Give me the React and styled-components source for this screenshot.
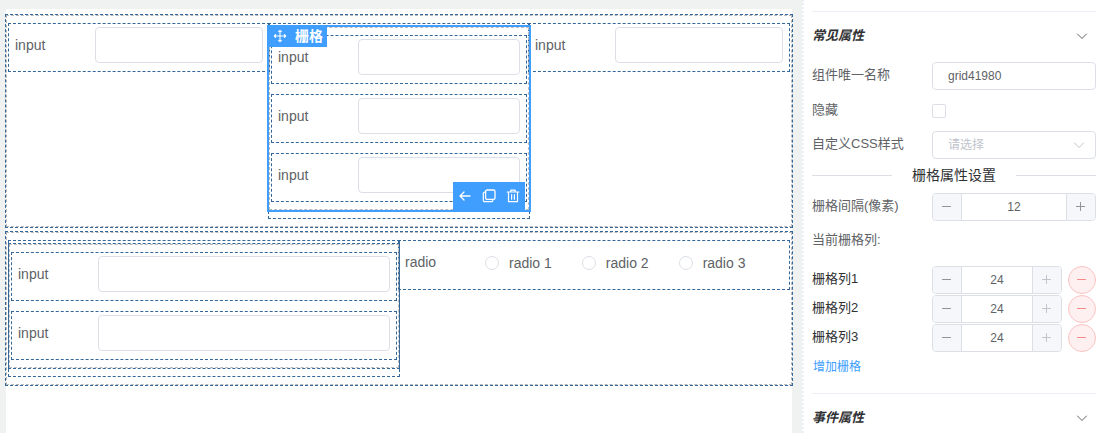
import styled, { createGlobalStyle, css } from 'styled-components';
import { useId, useState } from 'react';

const GlobalStyle = createGlobalStyle`
  * {
    box-sizing: border-box;
  }
  body {
    margin: 0;
    background: #fff;
    color: #606266;
    font-family: 'Liberation Sans', 'Noto Sans CJK SC', sans-serif;
    font-size: 14px;
  }
  button, input, select {
    font-family: inherit;
    margin: 0;
  }
`;

/* ---------- layout ---------- */
const Root = styled.div`
  display: flex;
  height: 100vh;
  overflow: hidden;
`;
const Main = styled.main`
  flex: 1;
  min-width: 0;
  padding: 9px 10px 0 6px;
  background: #f0f2f2;
`;
const Canvas = styled.div`
  display: flex;
  flex-direction: column;
  gap: 5px;
  height: 100%;
  padding-top: 6px;
  background: #fff;
`;
const Panel = styled.aside`
  width: 298px;
  padding: 11px 4px 0 8px;
  border-left: 2px dotted #ebeef5;
  overflow-y: auto;
  scrollbar-width: none;
`;

/* ---------- canvas widgets ---------- */
const GridBox = styled.div`
  position: relative;
  display: grid;
  grid-template-columns: repeat(${(props) => props.$cols || 1}, minmax(0, 1fr));
  align-items: start;
  row-gap: 12px;
  padding: 8px 2px;
  border: 1px dashed #bbb;
  outline: 1px dashed #336699;
  ${(props) =>
    props.$active &&
    css`
      outline: 2px solid #409eff;
    `}
`;
const Cell = styled.div`
  padding: 3px 0 8px;
  outline: 1px dashed #336699;
`;
const FieldCell = styled(Cell)`
  display: flex;
  padding: 3px 6px 8px;
`;
const FieldLabel = styled.label`
  flex: none;
  width: 80px;
  line-height: 36px;
`;
const FieldInput = styled.input`
  flex: 1;
  min-width: 0;
  height: 36px;
  padding: 0 15px;
  border: 1px solid #dcdfe6;
  border-radius: 4px;
  background: #fff;
  font-size: 14px;
`;
const RadioCell = styled(FieldCell)`
  padding-bottom: 9px;
`;
const RadioLabel = styled.label`
  display: flex;
  align-items: center;
  gap: 10px;
  margin-right: 30px;
  padding-top: 2px;
  white-space: nowrap;
`;
const Radio = styled.input.attrs({ type: 'radio' })`
  appearance: none;
  width: 14px;
  height: 14px;
  border: 1px solid #dcdfe6;
  border-radius: 50%;
  background: #fff;
  &:checked {
    border: 4px solid #409eff;
  }
`;
const DragHandle = styled.div`
  position: absolute;
  top: -3px;
  left: -3px;
  display: flex;
  align-items: center;
  gap: 8px;
  height: 22px;
  padding: 0 4px 0 6px;
  background: #409eff;
  color: #fff;
  font-weight: bold;
  line-height: 22px;
  cursor: move;
`;
const Tools = styled.div`
  position: absolute;
  right: 3px;
  bottom: -1px;
  display: flex;
  height: 28px;
  background: #409eff;
`;
const ToolButton = styled.button`
  display: grid;
  place-items: center;
  width: 24px;
  padding: 0;
  border: 0;
  background: none;
  color: #fff;
  cursor: pointer;
`;

/* ---------- property panel ---------- */
const SectionHead = styled.button`
  display: flex;
  align-items: center;
  justify-content: space-between;
  width: 100%;
  height: 49px;
  padding: 0 7px 0 0;
  border: 0;
  border-top: 1px solid #ebeef5;
  background: none;
  color: #303133;
  font-size: 13px;
  font-weight: bold;
  font-style: italic;
  line-height: 24px;
  cursor: pointer;
  svg {
    color: #606266;
  }
`;
const SectionTitle = styled.span`
  padding-bottom: 1px;
`;
const Props = styled.div`
  display: flex;
  flex-direction: column;
  gap: 6px;
  padding: 2px 0 0;
`;
const PropRow = styled.div`
  display: flex;
  align-items: center;
  min-height: ${(props) => (props.$tall ? '29px' : '28px')};
`;
const PropLabel = styled.label`
  flex: none;
  width: 120px;
  padding-bottom: 2px;
  color: ${(props) => (props.$dark ? '#303133' : '#606266')};
  font-size: 13px;
  line-height: 24px;
`;
const control = css`
  height: 28px;
  border: 1px solid #dcdfe6;
  border-radius: 4px;
  background: #fff;
  color: #606266;
  font-size: 12px;
`;
const TextInput = styled.input`
  ${control}
  flex: 1;
  min-width: 0;
  padding: 0 15px;
`;
const Checkbox = styled.input.attrs({ type: 'checkbox' })`
  appearance: none;
  width: 14px;
  height: 14px;
  border: 1px solid #dcdfe6;
  border-radius: 2px;
  background: #fff;
  &:checked {
    background: #409eff;
  }
`;
const SelectWrap = styled.div`
  position: relative;
  flex: 1;
  svg {
    position: absolute;
    top: 7px;
    right: 10px;
    color: #c0c4cc;
    pointer-events: none;
  }
`;
const Select = styled.select`
  ${control}
  display: block;
  appearance: none;
  width: 100%;
  padding: 0 30px 0 15px;
  color: #c0c4cc;
`;
const Divider = styled.div`
  display: flex;
  align-items: center;
  gap: 20px;
  height: 32px;
  margin-bottom: 2px;
  color: #303133;
  line-height: 32px;
  &::before,
  &::after {
    content: '';
    flex: 1;
    height: 1px;
    background: #dcdfe6;
  }
`;
const NumberWrap = styled.div`
  ${control}
  display: flex;
  flex: 1;
  min-width: 0;
  overflow: hidden;
`;
const NumberInput = styled.input`
  flex: 1;
  min-width: 0;
  padding: 0;
  border: solid #dcdfe6;
  border-width: 0 1px;
  color: #606266;
  font-size: 12px;
  text-align: center;
`;
const StepButton = styled.button`
  display: grid;
  place-items: center;
  width: 28px;
  padding: 0;
  border: 0;
  background: #f5f7fa;
  color: #909399;
  &:disabled {
    color: #c0c4cc;
  }
`;
const Caption = styled.p`
  margin: 6px 0 13px;
  font-size: 13px;
  line-height: 26px;
`;
const ColumnList = styled.div`
  display: flex;
  flex-direction: column;
  gap: 1px;
`;
const RemoveButton = styled.button`
  display: grid;
  place-items: center;
  flex: none;
  width: 28px;
  height: 28px;
  margin-left: 6px;
  padding: 0;
  border: 1px solid #fbc4c4;
  border-radius: 50%;
  background: #fef0f0;
  color: #f78989;
`;
const AddButton = styled.button`
  display: block;
  margin-bottom: 11px;
  padding: 0 1px;
  border: 0;
  background: none;
  color: #409eff;
  font-size: 12px;
  line-height: 30px;
  cursor: pointer;
`;

/* ---------- icons ---------- */
const Icon = ({ size = 14, children }) => (
  <svg
    width={size}
    height={size}
    viewBox="0 0 14 14"
    fill="none"
    stroke="currentColor"
    strokeLinecap="round"
    strokeLinejoin="round"
    aria-hidden="true"
  >
    {children}
  </svg>
);
const ChevronIcon = () => (
  <Icon>
    <path d="M2.5 5 7 9.5 11.5 5" />
  </Icon>
);
const MinusIcon = () => (
  <Icon>
    <path d="M2.5 6.5h8" />
  </Icon>
);
const PlusIcon = () => (
  <Icon>
    <path d="M2.5 6.5h8M6.5 2.5v8" />
  </Icon>
);
const MoveIcon = () => (
  <Icon>
    <path strokeWidth="1.1" d="M7 1.3v11.4M1.3 7h11.4M5.6 2.7 7 1.3l1.4 1.4M5.6 11.3 7 12.7l1.4-1.4M2.7 5.6 1.3 7l1.4 1.4M11.3 5.6 12.7 7l-1.4 1.4" />
  </Icon>
);
const BackIcon = () => (
  <Icon>
    <path strokeWidth="1.3" d="M2 7h10M6 3 2 7l4 4" />
  </Icon>
);
const CopyIcon = () => (
  <Icon>
    <rect x="3.6" y="1" width="9.4" height="9.4" rx="1.5" strokeWidth="1.3" />
    <path strokeWidth="1.2" d="M3.5 3.2H2.6A1.3 1.3 0 0 0 1.3 4.5v6.7a1.5 1.5 0 0 0 1.5 1.5h6.7a1.3 1.3 0 0 0 1.3-1.3v-1" />
  </Icon>
);
const TrashIcon = () => (
  <Icon>
    <path strokeWidth="1.2" d="M1.2 3h11.6M4.8 3V1.2h4.4V3M2.5 3.2v9.5h9V3.2M5.6 5.6v4.6M8.4 5.6v4.6" />
  </Icon>
);

const InputField = () => {
  const id = useId();
  return (
    <FieldCell>
      <FieldLabel htmlFor={id}>input</FieldLabel>
      <FieldInput id={id} type="text" />
    </FieldCell>
  );
};

const RadioField = ({ options }) => {
  const name = useId();
  return (
    <RadioCell role="radiogroup" aria-labelledby={name + 'label'}>
      <FieldLabel as="span" id={name + 'label'}>
        radio
      </FieldLabel>
      {options.map((option) => (
        <RadioLabel key={option}>
          <Radio name={name} value={option} />
          {option}
        </RadioLabel>
      ))}
    </RadioCell>
  );
};

const Stepper = ({ id, value, max, onChange }) => (
  <NumberWrap>
    <StepButton type="button" aria-label="减少" onClick={() => onChange(value - 1)}>
      <MinusIcon />
    </StepButton>
    <NumberInput id={id} type="text" value={value} onChange={(e) => onChange(Number(e.target.value) || 0)} />
    <StepButton type="button" aria-label="增加" disabled={value >= max} onClick={() => onChange(value + 1)}>
      <PlusIcon />
    </StepButton>
  </NumberWrap>
);

const Section = ({ title }) => (
  <SectionHead type="button">
    <SectionTitle>{title}</SectionTitle>
    <ChevronIcon />
  </SectionHead>
);

export default function App() {
  const [name, setName] = useState('grid41980');
  const [gutter, setGutter] = useState(12);
  const [columns, setColumns] = useState([24, 24, 24]);

  const changeColumn = (index, value) => {
    setColumns(columns.map((item, i) => (i === index ? value : item)));
  };

  return (
    <Root>
      <GlobalStyle />
      <Main>
        <Canvas>
          <GridBox $cols={3}>
            <InputField />
            <Cell>
              <GridBox $active>
                <InputField />
                <InputField />
                <InputField />
                <DragHandle>
                  <MoveIcon />
                  栅格
                </DragHandle>
                <Tools>
                  <ToolButton type="button" aria-label="选择父组件">
                    <BackIcon />
                  </ToolButton>
                  <ToolButton type="button" aria-label="复制">
                    <CopyIcon />
                  </ToolButton>
                  <ToolButton type="button" aria-label="删除">
                    <TrashIcon />
                  </ToolButton>
                </Tools>
              </GridBox>
            </Cell>
            <InputField />
          </GridBox>
          <GridBox $cols={2}>
            <Cell>
              <GridBox>
                <InputField />
                <InputField />
              </GridBox>
            </Cell>
            <RadioField options={['radio 1', 'radio 2', 'radio 3']} />
          </GridBox>
        </Canvas>
      </Main>
      <Panel>
        <Section title="常见属性" />
        <Props>
          <PropRow>
            <PropLabel htmlFor="name">组件唯一名称</PropLabel>
            <TextInput id="name" type="text" value={name} onChange={(e) => setName(e.target.value)} />
          </PropRow>
          <PropRow $tall>
            <PropLabel htmlFor="hidden">隐藏</PropLabel>
            <Checkbox id="hidden" />
          </PropRow>
          <PropRow>
            <PropLabel htmlFor="css">自定义CSS样式</PropLabel>
            <SelectWrap>
              <Select id="css" defaultValue="">
                <option value="">请选择</option>
              </Select>
              <ChevronIcon />
            </SelectWrap>
          </PropRow>
        </Props>
        <Divider>栅格属性设置</Divider>
        <PropRow>
          <PropLabel htmlFor="gutter">栅格间隔(像素)</PropLabel>
          <Stepper id="gutter" value={gutter} onChange={setGutter} />
        </PropRow>
        <Caption>当前栅格列:</Caption>
        <ColumnList>
          {columns.map((span, index) => (
            <PropRow key={index}>
              <PropLabel $dark htmlFor={`column${index}`}>
                栅格列{index + 1}
              </PropLabel>
              <Stepper id={`column${index}`} value={span} max={24} onChange={(value) => changeColumn(index, value)} />
              <RemoveButton
                type="button"
                aria-label="删除栅格列"
                onClick={() => setColumns(columns.filter((_, i) => i !== index))}
              >
                <MinusIcon />
              </RemoveButton>
            </PropRow>
          ))}
        </ColumnList>
        <AddButton type="button" onClick={() => setColumns([...columns, 24])}>
          增加栅格
        </AddButton>
        <Section title="事件属性" />
      </Panel>
    </Root>
  );
}
